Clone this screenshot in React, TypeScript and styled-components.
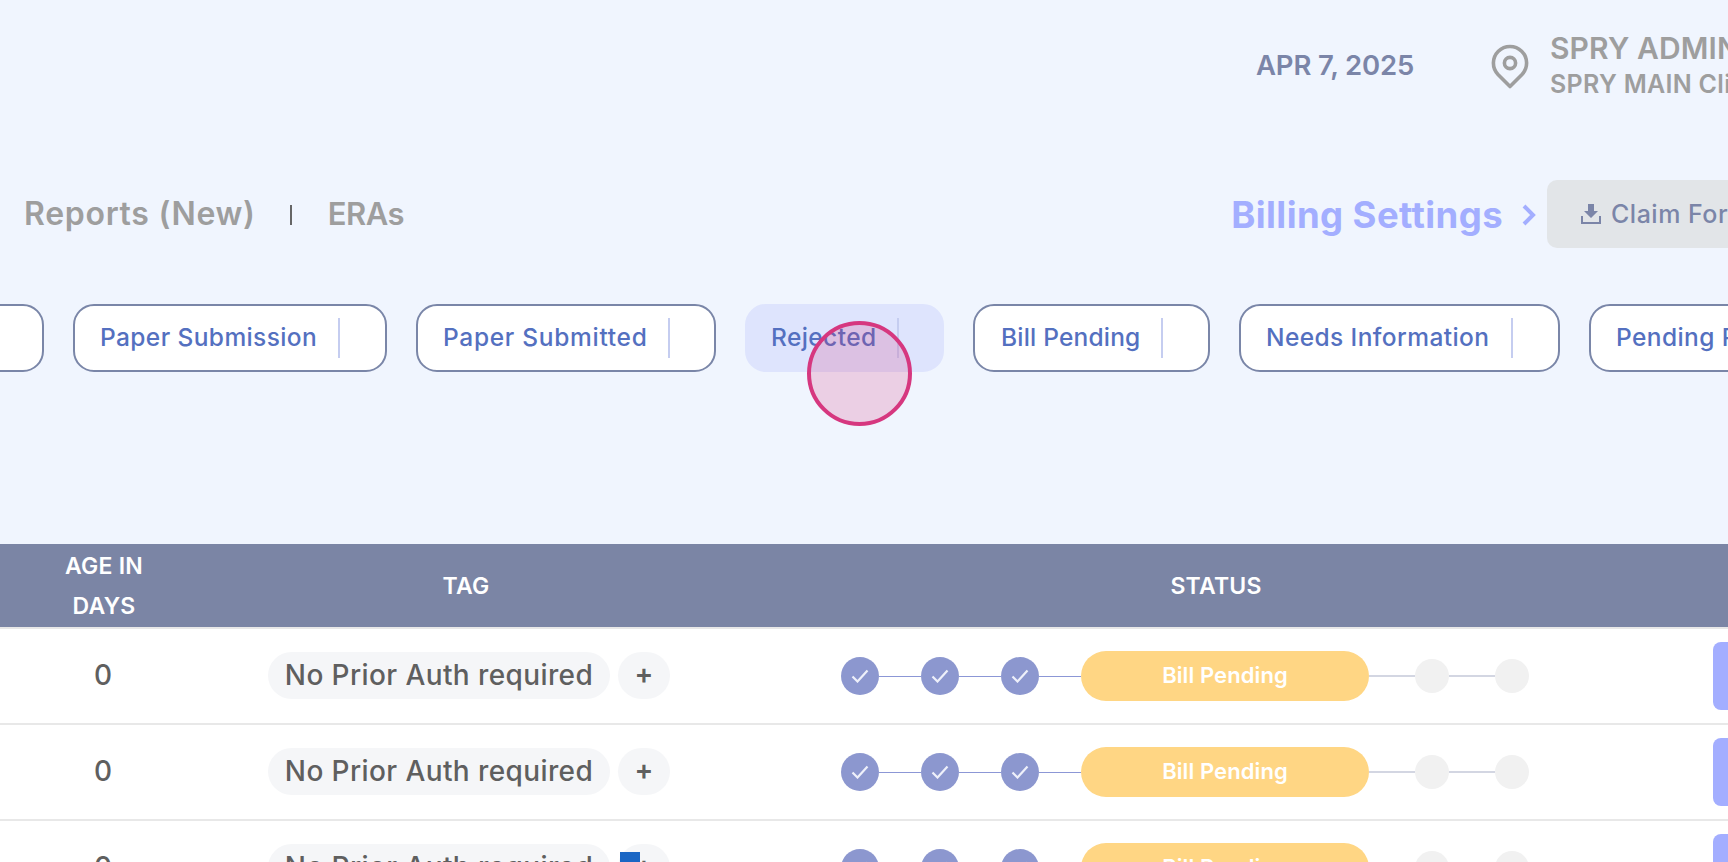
import React from "react";
import styled, { createGlobalStyle } from "styled-components";

const Global = createGlobalStyle`
  html, body { margin: 0; padding: 0; background: #f0f5fe; }
  * { box-sizing: border-box; }
  body { font-family: "Inter", "Liberation Sans", sans-serif; }
`;

const Page = styled.div`
  position: relative;
  width: 1728px;
  height: 862px;
  overflow: hidden;
  background: #f0f5fe;
  display: flex;
  flex-direction: column;
`;

const TopBar = styled.header`
  height: 130px;
  flex: none;
  display: flex;
  align-items: center;
  padding-left: 1256px;
  white-space: nowrap;
`;

const DateText = styled.div`
  width: 234px;
  flex: none;
  font-size: 27.5px;
  font-weight: 600;
  color: #7b85a8;
  letter-spacing: -0.15px;
`;

const PinBox = styled.div`
  width: 58px;
  flex: none;
  display: flex;
  align-items: center;
  margin-left: 1px;
  margin-right: 1px;
  margin-top: 2px;
`;

const ClinicBlock = styled.div`
  display: flex;
  flex-direction: column;
  color: #9e9e9e;
  font-weight: 600;
  margin-top: 2px;
`;

const ClinicName = styled.div`
  font-size: 30px;
  line-height: 36px;
  letter-spacing: 0.1px;
`;

const ClinicSub = styled.div`
  font-size: 25px;
  line-height: 35px;
  margin-top: 1px;
  letter-spacing: 0.3px;
`;

const TabsRow = styled.nav`
  height: 68px;
  margin-top: 50px;
  flex: none;
  display: flex;
  align-items: center;
  padding-left: 24px;
  white-space: nowrap;
`;

const TabLink = styled.span<{ $spacing: number; $size: number }>`
  font-size: ${(p) => p.$size}px;
  font-weight: 600;
  color: #9e9e9e;
  letter-spacing: ${(p) => p.$spacing}px;
  margin-top: -2px;
`;

const TabBar = styled.span`
  width: 2px;
  height: 20px;
  margin: 1px 36px 0 34px;
  background: #666;
`;

const BillingLink = styled.div`
  margin-left: auto;
  display: flex;
  align-items: center;
  gap: 18px;
  margin-right: 10px;
  padding-top: 1px;
  font-size: 36.5px;
  font-weight: 700;
  letter-spacing: 0.4px;
  color: #a3aeff;
`;

const ClaimButton = styled.button`
  flex: none;
  width: 380px;
  height: 68px;
  margin-right: -199px;
  padding: 0 0 0 33px;
  border: none;
  border-radius: 10px;
  background: #e2e5e8;
  color: #7b85a8;
  display: flex;
  align-items: center;
  gap: 9px;
  font-family: inherit;
  font-size: 25px;
  font-weight: 500;
  letter-spacing: 0.5px;
`;

const ChipRow = styled.div`
  margin-top: 56px;
  margin-left: -101px;
  height: 68px;
  flex: none;
  display: flex;
  gap: 29px;
`;

const Chip = styled.div<{ $w: number; $pad: number; $active?: boolean }>`
  width: ${(p) => p.$w}px;
  height: 68px;
  flex: none;
  display: flex;
  align-items: center;
  padding-left: ${(p) => p.$pad}px;
  border: 2px solid ${(p) => (p.$active ? "#dee4fd" : "#7a86a8")};
  border-radius: 21px;
  background: ${(p) => (p.$active ? "#dee4fd" : "#ffffff")};
  position: relative;
  white-space: nowrap;
`;

const ChipLabel = styled.span<{ $spacing: number }>`
  font-size: 24.5px;
  font-weight: 500;
  letter-spacing: ${(p) => p.$spacing}px;
  color: #5470c0;
  margin-top: -2px;
`;

const ChipDivider = styled.span<{ $x: number }>`
  position: absolute;
  left: ${(p) => p.$x}px;
  top: 12px;
  width: 2px;
  height: 40px;
  background: #c5cdf0;
`;

const Table = styled.section`
  margin-top: 172px;
  flex: none;
  background: #fff;
`;

const HeadRow = styled.div`
  height: 85px;
  display: grid;
  grid-template-columns: 208px 516px 984px 20px;
  align-items: center;
  text-align: center;
  background: #7b85a5;
  border-bottom: 2px solid #e8e8e8;
  color: #fff;
  font-size: 23px;
  font-weight: 600;
  letter-spacing: 0.2px;
  line-height: 40px;
`;

const Row = styled.div`
  height: 96px;
  display: grid;
  grid-template-columns: 206px 526px 981px 15px;
  align-items: center;
  border-bottom: 2px solid #e8e8e8;
`;

const AgeCell = styled.div`
  text-align: center;
  font-size: 28px;
  font-weight: 500;
  color: #5f5f5f;
  padding-bottom: 2px;
`;

const TagCell = styled.div`
  display: flex;
  gap: 8px;
  padding-left: 62px;
  margin-bottom: 2px;
`;

const TagPill = styled.div`
  width: 342px;
  height: 47px;
  border-radius: 24px;
  background: #f5f6f8;
  display: flex;
  align-items: center;
  justify-content: center;
  font-size: 28px;
  font-weight: 500;
  letter-spacing: 0.4px;
  color: #5f5f5f;
  white-space: nowrap;
`;

const PlusPill = styled.div`
  position: relative;
  width: 52px;
  height: 47px;
  border-radius: 24px;
  background: #f5f6f8;
  display: flex;
  align-items: center;
  justify-content: center;
  font-size: 28px;
  font-weight: 600;
  color: #5f5f5f;
  padding-bottom: 3px;
`;

const Marker = styled.span`
  position: absolute;
  left: 2px;
  top: 8px;
  width: 20px;
  height: 24px;
  background: #1a66c4;
`;

const Steps = styled.div`
  display: flex;
  align-items: center;
  padding-left: 109px;
`;

const DoneDot = styled.span`
  width: 38px;
  height: 38px;
  flex: none;
  border-radius: 50%;
  background: #8c97cf;
  display: flex;
  align-items: center;
  justify-content: center;
`;

const TodoDot = styled.span`
  width: 34px;
  height: 34px;
  flex: none;
  border-radius: 50%;
  background: #f1f1f1;
`;

const Link = styled.span<{ $w: number; $todo?: boolean }>`
  width: ${(p) => p.$w}px;
  flex: none;
  height: ${(p) => (p.$todo ? 2 : 1)}px;
  background: ${(p) => (p.$todo ? "#d3d6e2" : "#8c97d6")};
`;

const StatusPill = styled.div`
  width: 288px;
  height: 50px;
  flex: none;
  border-radius: 25px;
  background: #ffd684;
  color: #fff;
  display: flex;
  align-items: center;
  justify-content: center;
  font-size: 22px;
  font-weight: 600;
  letter-spacing: 0.1px;
  padding-bottom: 3px;
`;

const ActionCell = styled.div`
  width: 40px;
  height: 68px;
  border-radius: 8px;
  background: #a3aeff;
`;

const Touch = styled.div`
  position: absolute;
  left: 807px;
  top: 321px;
  width: 105px;
  height: 105px;
  border-radius: 50%;
  border: 4px solid #d6377f;
  background: rgba(214, 55, 127, 0.2);
`;

const Check = () => (
  <svg width="18" height="14" viewBox="0 0 18 14" fill="none">
    <path d="M1.5 7.5 L6.5 12.5 L16.5 1.5" stroke="#eef0fa" strokeWidth="2.2" />
  </svg>
);

const Pin = () => (
  <svg width="38" height="45" viewBox="0 0 38 45" fill="none" stroke="#9e9e9e" strokeWidth="3.6">
    <path d="M19 42.5 L7 30.5 A16.6 16.6 0 1 1 31 30.5 Z" strokeLinejoin="round" />
    <circle cx="19" cy="19" r="5.6" />
  </svg>
);

const Chevron = () => (
  <svg width="16" height="22" viewBox="0 0 16 22" fill="none" stroke="#a3aeff" strokeWidth="4">
    <path d="M3 2 L12 11 L3 20" />
  </svg>
);

const Download = () => (
  <svg width="22" height="20" viewBox="0 0 22 20" fill="#7b85a8">
    <path d="M8 0h6v7h4l-7 7-7-7h4z" />
    <path d="M1 12h2v6h16v-6h2v8H1z" />
  </svg>
);

const chips = [
  { w: 145, label: "", d: 0, pad: 26, s: 0.4 },
  { w: 314, label: "Paper Submission", d: 263, pad: 25, s: 0.4 },
  { w: 300, label: "Paper Submitted", d: 250, pad: 25, s: 0.7 },
  { w: 199, label: "Rejected", d: 150, pad: 24, s: 0.4, active: true },
  { w: 237, label: "Bill Pending", d: 186, pad: 26, s: 0.2 },
  { w: 321, label: "Needs Information", d: 270, pad: 25, s: 0.4 },
  { w: 322, label: "Pending Review", d: 270, pad: 25, s: 0.4 },
];

const Status = () => (
  <Steps>
    <DoneDot><Check /></DoneDot>
    <Link $w={42} />
    <DoneDot><Check /></DoneDot>
    <Link $w={42} />
    <DoneDot><Check /></DoneDot>
    <Link $w={42} />
    <StatusPill>Bill Pending</StatusPill>
    <Link $w={46} $todo />
    <TodoDot />
    <Link $w={46} $todo />
    <TodoDot />
  </Steps>
);

const DataRow = ({ marked }: { marked?: boolean }) => (
  <Row>
    <AgeCell>0</AgeCell>
    <TagCell>
      <TagPill>No Prior Auth required</TagPill>
      <PlusPill>+{marked && <Marker />}</PlusPill>
    </TagCell>
    <Status />
    <ActionCell />
  </Row>
);

export default function App() {
  return (
    <Page>
      <Global />
      <TopBar>
        <DateText>APR 7, 2025</DateText>
        <PinBox><Pin /></PinBox>
        <ClinicBlock>
          <ClinicName>SPRY ADMIN</ClinicName>
          <ClinicSub>SPRY MAIN Clinic</ClinicSub>
        </ClinicBlock>
      </TopBar>
      <TabsRow>
        <TabLink $size={32} $spacing={0.7}>Reports (New)</TabLink>
        <TabBar />
        <TabLink $size={31} $spacing={-0.5}>ERAs</TabLink>
        <BillingLink>Billing Settings <Chevron /></BillingLink>
        <ClaimButton><Download />Claim Forms</ClaimButton>
      </TabsRow>
      <ChipRow>
        {chips.map((c) => (
          <Chip key={c.w} $w={c.w} $pad={c.pad} $active={c.active}>
            {c.label && <ChipLabel $spacing={c.s}>{c.label}</ChipLabel>}
            {c.label && <ChipDivider $x={c.d} />}
          </Chip>
        ))}
      </ChipRow>
      <Table>
        <HeadRow>
          <div>AGE IN<br />DAYS</div>
          <div>TAG</div>
          <div>STATUS</div>
        </HeadRow>
        <DataRow />
        <DataRow />
        <DataRow marked />
      </Table>
      <Touch />
    </Page>
  );
}
